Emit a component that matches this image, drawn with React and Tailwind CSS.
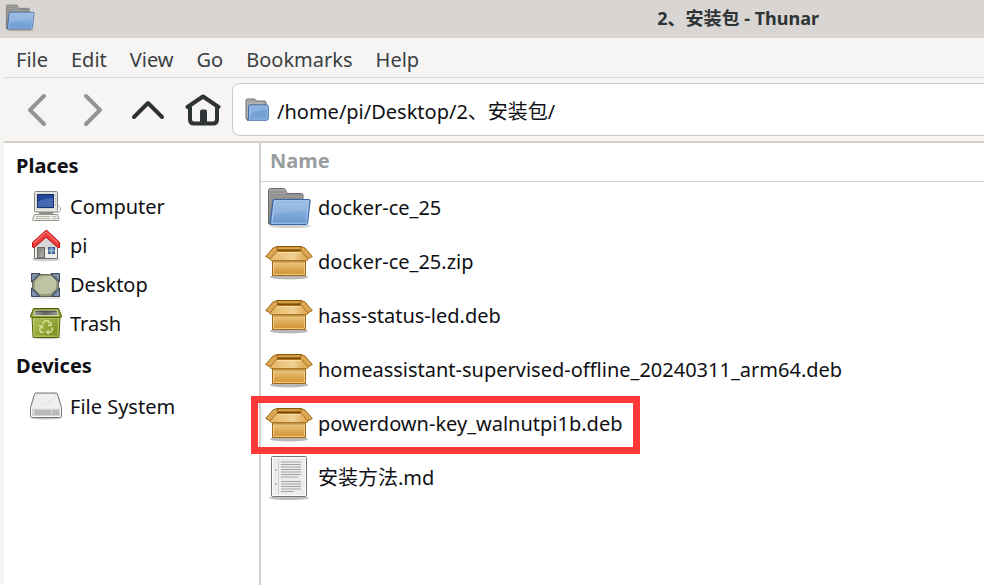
const fontStack = "font-['Noto_Sans','Noto_Sans_CJK_SC',sans-serif]";

function FolderIcon({ className, id }) {
  return (
    <svg viewBox="0 0 48 48" className={className} aria-hidden="true">
      <defs>
        <linearGradient id={`${id}-front`} x1="0" y1="0" x2="0" y2="1">
          <stop offset="0" stopColor="#92b6e0" />
          <stop offset="0.5" stopColor="#82abdb" />
          <stop offset="1" stopColor="#6896cf" />
        </linearGradient>
        <linearGradient id={`${id}-back`} x1="0" y1="0" x2="0" y2="1">
          <stop offset="0" stopColor="#a6a6a4" />
          <stop offset="1" stopColor="#858583" />
        </linearGradient>
      </defs>
      <ellipse cx="25" cy="42" rx="21" ry="2" fill="#000" opacity="0.18" />
      <path d="M3.5 40V6.5Q3.5 4.5 5.5 4.5H18.5Q20 4.5 20.8 6.5L21.8 9.5H36.5Q38 9.5 38 11V40Z" fill={`url(#${id}-back)`} stroke="#6b6b69" />
      <path d="M5 8H19M5 11H36M5 14H36M5 17H8M5 20H8M5 23H7M5 26H7M5 29H7" stroke="#777775" strokeWidth="0.7" />
      <path d="M9.5 15.5H43.5Q45.3 15.5 45 17.5L42.6 38.5Q42.3 40.5 40.5 40.5H6.5Q5 40.5 5.3 38.5L8 17Q8.2 15.5 9.5 15.5Z" fill={`url(#${id}-front)`} stroke="#3767a7" strokeWidth="1.2" />
      <path d="M9.6 16.8H43.6L41.4 39.2H6.8Z" fill="none" stroke="#b9d2ef" strokeWidth="0.8" />
      <path d="M10 18H43L42 27Q24 26 9 31Z" fill="#fff" opacity="0.12" />
    </svg>
  );
}

function SmallFolderIcon({ className }) {
  return (
    <svg viewBox="0 0 24 24" className={className} aria-hidden="true">
      <path d="M1 21V2.5Q1 1 2.5 1H9Q10.3 1 10.8 2.4L11 3H19.5Q21 3 21 4.5V19H4V21Z" fill="#a5a5a3" stroke="#73736f" />
      <path d="M3 4V20M5 5H18" stroke="#c1c1bf" />
      <path d="M4.5 7H22Q23.3 7 23.3 8.2V20.5Q23.3 22.2 21.5 22.2H2Q3.6 21.5 3.6 19V8.5Q3.6 7 4.5 7Z" fill="#7ea8da" stroke="#3767a7" />
      <path d="M4.8 8.2H22.2V20.6Q22.2 21 21.5 21H4.6Z" fill="#87afdf" stroke="#aac8ea" strokeWidth="0.8" />
      <path d="M5.5 16Q14 12 22 12V20.5H5Z" fill="#6996cd" opacity="0.6" />
    </svg>
  );
}

function PackageIcon({ className, id }) {
  return (
    <svg viewBox="0 0 48 48" className={className} aria-hidden="true">
      <defs>
        <linearGradient id={`${id}-box`} x1="0" y1="0" x2="0" y2="1">
          <stop offset="0" stopColor="#d9a24a" />
          <stop offset="0.3" stopColor="#eac27b" />
          <stop offset="1" stopColor="#d08d29" />
        </linearGradient>
        <linearGradient id={`${id}-flap`} x1="0" y1="0" x2="1" y2="0">
          <stop offset="0" stopColor="#e6b766" />
          <stop offset="0.6" stopColor="#f0d094" />
          <stop offset="1" stopColor="#dda549" />
        </linearGradient>
      </defs>
      <ellipse cx="24" cy="39" rx="19" ry="2.6" fill="#000" opacity="0.28" />
      <path d="M12 8.5H36L40 14V24H8V14Z" fill="#a66b12" stroke="#8f5902" />
      <path d="M13 9.2H35L37 11.5H11Z" fill="#d9a450" />
      <path d="M12.5 11.5H35.5L37 14H11Z" fill="#7e4e05" />
      <path d="M7.5 19.5H40.5V37.5H7.5Z" fill={`url(#${id}-box)`} stroke="#a06713" />
      <path d="M8.6 23V36.4H39.4V23" fill="none" stroke="#f2d59c" strokeWidth="0.9" />
      <path d="M8 22.5H40V24.5H8Z" fill="#8a5405" opacity="0.4" />
      <path d="M12 8.5 8 10 0.7 18.5Q3 20.3 5.5 20.5L12.5 13.5Z" fill="#dca755" stroke="#a06713" />
      <path d="M36 8.5 40 10 47.3 18.5Q45 20.3 42.5 20.5L35.5 13.5Z" fill="#dca755" stroke="#a06713" />
      <path d="M11.5 13.5H36.5L43 21Q43 22.5 41.5 22.5H6.5Q5 22.5 5 21Z" fill={`url(#${id}-flap)`} stroke="#ad7422" />
      <path d="M12 14.6H36" stroke="#fbe3b5" strokeWidth="0.8" />
    </svg>
  );
}

function DocumentIcon({ className }) {
  return (
    <svg viewBox="0 0 48 48" className={className} aria-hidden="true">
      <ellipse cx="24" cy="44" rx="20" ry="2" fill="#000" opacity="0.25" />
      <rect x="6.5" y="2.5" width="35" height="40" rx="1.2" fill="#ececea" stroke="#767674" />
      <rect x="7.7" y="3.7" width="32.6" height="37.6" fill="none" stroke="#fff" />
      <path d="M13.5 4V41" stroke="#d2d2d0" />
      <path d="M11 15.5V17M11 29V30.5" stroke="#a2a2a0" strokeWidth="1.5" />
      <path d="M16 8H36M16 10.5H36M16 13H36M16 15.5H36M16 18H36M16 20.5H36M16 23H33M16 27.5H36M16 30H36M16 32.5H36M16 35H36M16 37.5H29" stroke="#a3a3a1" strokeWidth="1.1" />
    </svg>
  );
}

function ComputerIcon() {
  return (
    <svg viewBox="0 0 32 32" className="size-8 shrink-0" aria-hidden="true">
      <path d="M28 14.5Q31.5 16 30.5 19T27 22" fill="none" stroke="#aaa" />
      <rect x="4.5" y="0.5" width="23" height="20.5" rx="1.2" fill="#e8e8e3" stroke="#85867f" />
      <rect x="6.5" y="2.5" width="18" height="15.5" fill="#cfcfc8" />
      <rect x="7.5" y="3.5" width="16" height="13" fill="#24479a" stroke="#18306e" />
      <path d="M8 11Q14 7 23 7V16H8Z" fill="#5178bd" opacity="0.7" />
      <path d="M25.8 4V16" stroke="#777" strokeDasharray="1 2" />
      <path d="M9 21H23V24H9Z" fill="#8e8e88" />
      <path d="M4.5 23.5H27.5L29 28.5Q29 29.5 28 29.5H3.5Q2.5 29.5 2.5 28.5Z" fill="#efefea" stroke="#989891" />
      <path d="M6 25.5H20M5.5 27.5H20M22 25.5H26M22 27.5H27" stroke="#b9b8b0" />
    </svg>
  );
}

function HomeFolderIcon() {
  return (
    <svg viewBox="0 0 32 32" className="size-8 shrink-0" aria-hidden="true">
      <ellipse cx="16" cy="29.5" rx="14" ry="1.8" fill="#000" opacity="0.2" />
      <path d="M4.5 16 16 4 27.5 16V28.5H4.5Z" fill="#f0f0ee" stroke="#6b6d69" />
      <path d="M6 15 16 7 26 15V19H6Z" fill="#d7d7d5" />
      <path d="M7.5 17.5H14.5V28H7.5Z" fill="#8d8f87" stroke="#666861" />
      <path d="M8.5 27 13.5 19V27Z" fill="#aaaaa2" />
      <rect x="18.5" y="17.5" width="6" height="6" fill="#658bbb" stroke="#3e608f" />
      <path d="M21.5 17V24M18 20.5H25" stroke="#bbcde3" strokeWidth="0.7" />
      <path d="M14 2 15.5 0.6Q16.2 0 17 0.6L29.5 12.3V17.5Q28 18 27.3 17L16 7.2 4.5 17.3Q2.7 18 2.5 17V12.5Z" fill="#ef3b3b" stroke="#b90e12" />
      <path d="M4 13 16.2 1.8 28 13.2" fill="none" stroke="#fb9292" />
    </svg>
  );
}

function DesktopIcon() {
  return (
    <svg viewBox="0 0 32 32" className="size-8 shrink-0" aria-hidden="true">
      <path d="M2 28H30V30H2Z" fill="#000" opacity="0.1" />
      <rect x="2.5" y="5.5" width="26" height="22" fill="#b2b494" stroke="#636754" />
      <path d="M3 16Q9 9 17 6.5H28V16Q24 23 12 27H3Z" fill="#c5c7aa" opacity="0.7" />
      <path d="M1.5 4.5H10L7.5 7.5 4.5 10.5 1.5 13ZM29.5 4.5H21L23.5 7.5 26.5 10.5 29.5 13ZM1.5 27.5V19L4.5 21.5 7.5 24.5 10 27.5ZM29.5 27.5V19L26.5 21.5 23.5 24.5 21 27.5Z" fill="#677993" stroke="#3c4b62" />
      <path d="M3 10V6H7M28 10V6H24M3 23V26H6M28 23V26H25" fill="none" stroke="#a0afc3" />
      <path d="M10 6H21L27 12V20L21 26H10L4 20V12Z" fill="none" stroke="#787b64" />
    </svg>
  );
}

function TrashIcon() {
  return (
    <svg viewBox="0 0 32 32" className="size-8 shrink-0" aria-hidden="true">
      <defs>
        <linearGradient id="trash-body" x1="0" y1="0" x2="1" y2="1">
          <stop offset="0" stopColor="#b3c45b" />
          <stop offset="1" stopColor="#768b18" />
        </linearGradient>
        <linearGradient id="trash-opening" x1="0" y1="0" x2="1" y2="0">
          <stop offset="0" stopColor="#9b9d98" />
          <stop offset="0.5" stopColor="#60625e" />
          <stop offset="1" stopColor="#9b9d98" />
        </linearGradient>
      </defs>
      <ellipse cx="16" cy="29.5" rx="15" ry="1.5" fill="#000" opacity="0.25" />
      <path d="M2 8H30L29 28Q29 29.5 27.5 29.5H4.5Q3.2 29.5 3 28Z" fill="url(#trash-body)" stroke="#4d6308" />
      <path d="M3.4 10H28.8L27.9 28.2H4.3Z" fill="none" stroke="#c9d581" strokeWidth="0.8" />
      <path d="M3.5 0.5H28.5L31.5 8Q31.8 9.5 30.5 9.5H1.5Q0.2 9.5 0.5 8Z" fill="#93a635" stroke="#4d6308" />
      <path d="M5 2.5H27L28.3 7.5H3.7Z" fill="url(#trash-opening)" stroke="#e0e6c0" strokeWidth="0.8" />
      <path d="M5.5 2.5H26.5V4H5.2Z" fill="#3a3c38" opacity="0.6" />
      <path d="M12.5 16 15 12.8H18L20 15.5M21.2 14V17.2H18M21.5 19.5 22.5 21.5 20.5 24.2H17.2M18.8 22.2 16.8 24.2 18.8 26M13.5 24.2H11L9.5 21.5 11.5 18.2M8.9 18.3 12 17.6 12.8 20.5" fill="none" stroke="#d3df98" strokeWidth="1.4" />
    </svg>
  );
}

function DriveIcon() {
  return (
    <svg viewBox="0 0 32 32" className="size-8 shrink-0" aria-hidden="true">
      <ellipse cx="16" cy="27" rx="15" ry="1.4" fill="#000" opacity="0.25" />
      <path d="M4.5 3Q4.8 2 6 2H26Q27.2 2 27.5 3L31.5 16.5V25Q31.5 26.5 30 26.5H2Q0.5 26.5 0.5 25V16.5Z" fill="#e3e3e1" stroke="#777875" />
      <path d="M5.5 3.5H26.5L30 16.5H2Z" fill="#efefed" />
      <path d="M1.5 17H30.5V25.5H1.5Z" fill="#d4d4d2" stroke="#f9f9f9" />
      <path d="M12 14Q19 13 24 7M6 5.5H8M24 5.5H26" fill="none" stroke="#dcdcda" />
      <path d="M6 19V24M8 19V24M10 19V24M12 19V24M14 19V24M16 19V24M18 19V24M20 19V24" stroke="#9f9f9d" />
      <path d="M22 19H29V24H22Z" fill="#b9b9b7" />
    </svg>
  );
}

function NavIcon({ children }) {
  return (
    <svg
      viewBox="0 0 36 36"
      className="size-9"
      fill="none"
      stroke="currentColor"
      strokeWidth="4"
      strokeLinecap="round"
      strokeLinejoin="round"
      aria-hidden="true"
    >
      {children}
    </svg>
  );
}

const menus = ["File", "Edit", "View", "Go", "Bookmarks", "Help"];

const places = [
  { label: "Computer", Icon: ComputerIcon },
  { label: "pi", Icon: HomeFolderIcon },
  { label: "Desktop", Icon: DesktopIcon },
  { label: "Trash", Icon: TrashIcon },
];

const devices = [{ label: "File System", Icon: DriveIcon }];

const files = [
  { name: "docker-ce_25", Icon: FolderIcon },
  { name: "docker-ce_25.zip", Icon: PackageIcon },
  { name: "hass-status-led.deb", Icon: PackageIcon },
  { name: "homeassistant-supervised-offline_20240311_arm64.deb", Icon: PackageIcon },
  { name: "powerdown-key_walnutpi1b.deb", Icon: PackageIcon, marked: true },
  { name: "安装方法.md", Icon: DocumentIcon },
];

function SideSection({ title, items }) {
  return (
    <section>
      <h2 className="flex h-11 items-center pt-px pl-3 font-bold">{title}</h2>
      <ul>
        {items.map(({ label, Icon }) => (
          <li key={label}>
            <button type="button" className="flex h-[39px] w-full items-center gap-2 pl-[26px] text-left">
              <Icon />
              {label}
            </button>
          </li>
        ))}
      </ul>
    </section>
  );
}

export default function App() {
  return (
    <div className={`flex min-h-screen flex-col overflow-hidden bg-[#f6f5f3] text-[20px] leading-7 text-[#101014] ${fontStack}`}>
      <header className="flex h-[38px] shrink-0 items-center bg-[#d9d5d2] pb-[2px] pl-1">
        <FolderIcon className="size-8" id="title-folder" />
        <h1 className="mr-[165px] ml-auto text-[18px] leading-6 font-bold text-[#2e3436]">2、安装包 - Thunar</h1>
      </header>

      <div className="ml-1 flex flex-1 flex-col">
        <nav className="flex h-10 shrink-0 items-center gap-[23px] border-b border-[#dcdad7] pl-3 text-[#3a4043]">
          {menus.map((menu) => (
            <button key={menu} type="button" className="pt-1">{menu}</button>
          ))}
        </nav>

        <div className="flex h-[65px] shrink-0 items-center border-b-2 border-[#d5d0ca] pl-[6px]">
          <button type="button" aria-label="Back" className="flex w-[55px] justify-center text-[#929595]">
            <NavIcon><path d="M24 4 10 18 24 32" /></NavIcon>
          </button>
          <button type="button" aria-label="Forward" className="flex w-[55px] justify-center text-[#929595]">
            <NavIcon><path d="M11 4 25 18 11 32" /></NavIcon>
          </button>
          <button type="button" aria-label="Up" className="flex w-[55px] justify-center text-[#2e3436]">
            <NavIcon><path d="M4 25 18 11 32 25" /></NavIcon>
          </button>
          <button type="button" aria-label="Home" className="flex w-[55px] justify-center text-[#2e3436]">
            <NavIcon>
              <path d="M2.5 15 18 4.5 33.5 15" />
              <path d="M5 15V27.5Q5 31.5 9 31.5H28Q32 31.5 32 27.5V15" />
              <path d="M15 32V19.5Q15 17.5 17 17.5H20Q22 17.5 22 19.5V32Z" fill="currentColor" stroke="none" />
            </NavIcon>
          </button>
          <label className="-mr-2 ml-[2px] flex h-[53px] flex-1 items-center gap-2 rounded-lg border border-[#cdc7c2] bg-white pl-3">
            <SmallFolderIcon className="size-6 shrink-0" />
            <input aria-label="Location" className="min-w-0 flex-1 pt-1 outline-none" defaultValue="/home/pi/Desktop/2、安装包/" />
          </label>
        </div>

        <div className="flex flex-1 bg-white">
          <aside className="w-[257px] shrink-0 border-r-2 border-[#d5d0cc]">
            <SideSection title="Places" items={places} />
            <SideSection title="Devices" items={devices} />
          </aside>

          <main className="min-w-0 flex-1">
            <table className="w-full border-collapse text-left">
              <thead>
                <tr>
                  <th className="h-[38px] border-b border-[#d5d0cc] pb-px pl-[9px] font-bold text-[#989da0]">Name</th>
                </tr>
              </thead>
              <tbody>
                {files.map(({ name, Icon, marked }, index) => (
                  <tr key={name}>
                    <td className="relative h-[54px] p-0">
                      <div className="flex items-center gap-[5px] pl-1">
                        <Icon className="size-12 shrink-0" id={`file-${index}`} />
                        {name}
                      </div>
                      {marked && (
                        <div className="pointer-events-none absolute top-[-1px] left-[-10px] h-[58px] w-[389px] border-[7px] border-[#ff3838]" />
                      )}
                    </td>
                  </tr>
                ))}
              </tbody>
            </table>
          </main>
        </div>
      </div>
    </div>
  );
}
